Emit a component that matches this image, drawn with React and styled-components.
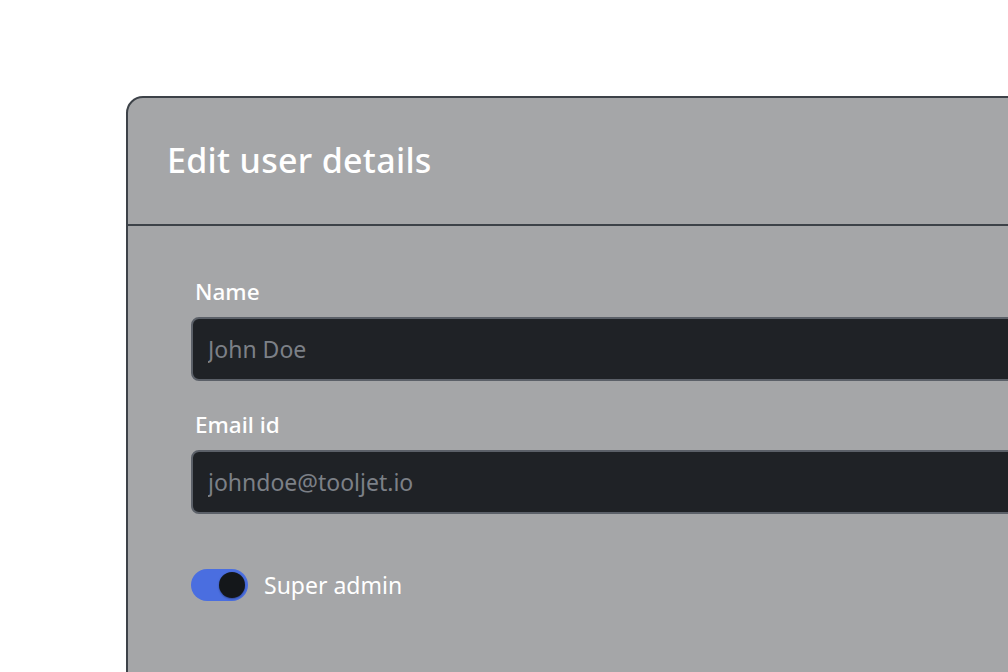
import React, { useState } from 'react';
import styled, { createGlobalStyle } from 'styled-components';

const GlobalStyle = createGlobalStyle`
	html, body {
		margin: 0;
		padding: 0;
		background: #ffffff;
		overflow: hidden;
	}
	body {
		font-family: 'Noto Sans', 'Open Sans', sans-serif;
	}
`;

const Page = styled.div`
	width: 1008px;
	height: 672px;
	padding: 96px 0 0 126px;
	box-sizing: border-box;
	overflow: hidden;
`;

const Card = styled.div`
	width: 1000px;
	height: 700px;
	background-color: #a5a6a8;
	border: 2px solid #3d4248;
	border-radius: 17px;
	box-sizing: border-box;
`;

const Header = styled.div`
	height: 128px;
	padding: 0 39px;
	display: flex;
	align-items: center;
	border-bottom: 2px solid #3d4248;
	box-sizing: border-box;
`;

const Title = styled.h1`
	margin: 0 0 2px;
	font-size: 34px;
	font-weight: 500;
	color: #ffffff;
	letter-spacing: 0.3px;
`;

const Body = styled.div`
	padding: 51px 0 0 63px;
	display: flex;
	flex-direction: column;
	gap: 29px;
`;

const Field = styled.div`
	display: flex;
	flex-direction: column;
	gap: 10px;
`;

const Label = styled.label`
	padding-left: 4px;
	font-size: 22.5px;
	font-weight: 500;
	line-height: 30px;
	color: #ffffff;
`;

const Input = styled.input`
	width: 900px;
	height: 64px;
	padding: 0 15px;
	box-sizing: border-box;
	background-color: #1f2226;
	border: 2px solid #5b6068;
	border-radius: 8px;
	font-family: inherit;
	font-size: 23px;
	color: #e6e7e9;
	outline: none;

	&::placeholder {
		color: #7c8087;
	}
`;

const ToggleRow = styled.div`
	display: flex;
	align-items: center;
	gap: 16px;
	margin-top: 26px;
`;

const Switch = styled.button`
	width: 57px;
	height: 32px;
	padding: 0 3px;
	border: none;
	border-radius: 16px;
	background-color: ${({ $on }) => ($on ? '#4a6ee0' : '#5b6068')};
	display: flex;
	align-items: center;
	justify-content: ${({ $on }) => ($on ? 'flex-end' : 'flex-start')};
	cursor: pointer;
`;

const Knob = styled.span`
	width: 26px;
	height: 26px;
	border-radius: 50%;
	background-color: #14171a;
	box-shadow: 0 1px 2px rgba(0, 0, 0, 0.35);
`;

const ToggleText = styled.span`
	font-size: 23px;
	color: #ffffff;
`;

const App = () => {
	const [isAdmin, setIsAdmin] = useState(true);

	return (
		<>
			<GlobalStyle />
			<Page>
				<Card>
					<Header>
						<Title>Edit user details</Title>
					</Header>
					<Body>
						<Field>
							<Label>Name</Label>
							<Input placeholder="John Doe" />
						</Field>
						<Field>
							<Label>Email id</Label>
							<Input placeholder="johndoe@tooljet.io" />
						</Field>
						<ToggleRow>
							<Switch $on={isAdmin} onClick={() => setIsAdmin(prev => !prev)}>
								<Knob />
							</Switch>
							<ToggleText>Super admin</ToggleText>
						</ToggleRow>
					</Body>
				</Card>
			</Page>
		</>
	);
};

export default App;
